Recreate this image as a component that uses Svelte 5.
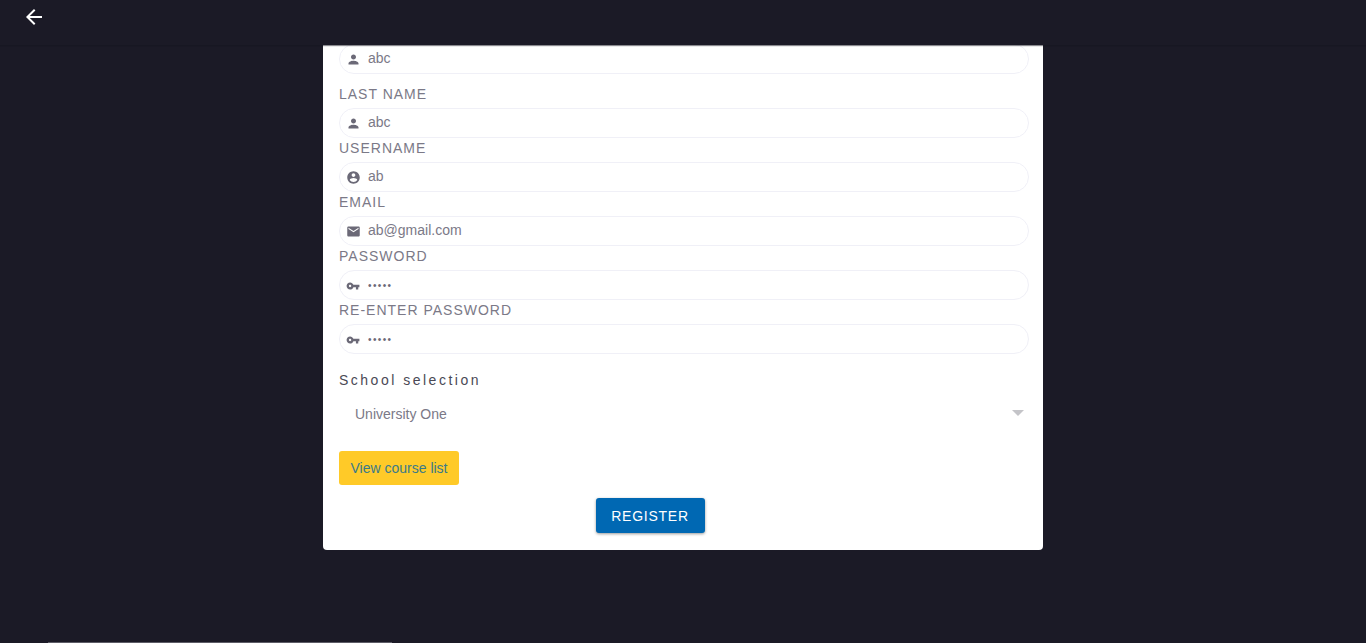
<script>
  const icons = {
    person: 'M12 12c2.21 0 4-1.79 4-4s-1.79-4-4-4-4 1.79-4 4 1.79 4 4 4zm0 2c-2.67 0-8 1.34-8 4v2h16v-2c0-2.66-5.33-4-8-4z',
    account: 'M12 2C6.48 2 2 6.48 2 12s4.48 10 10 10 10-4.48 10-10S17.52 2 12 2zm0 3c1.66 0 3 1.34 3 3s-1.34 3-3 3-3-1.34-3-3 1.34-3 3-3zm0 14.2c-2.5 0-4.71-1.28-6-3.22.03-1.99 4-3.08 6-3.08 1.99 0 5.97 1.09 6 3.08-1.29 1.94-3.5 3.22-6 3.22z',
    email: 'M20 4H4c-1.1 0-1.99.9-1.99 2L2 18c0 1.1.9 2 2 2h16c1.1 0 2-.9 2-2V6c0-1.1-.9-2-2-2zm0 4l-8 5-8-5V6l8 5 8-5v2z',
    key: 'M12.65 10C11.83 7.67 9.61 6 7 6c-3.31 0-6 2.69-6 6s2.69 6 6 6c2.61 0 4.83-1.67 5.65-4H17v4h4v-4h2v-4H12.65zM7 14c-1.1 0-2-.9-2-2s.9-2 2-2 2 .9 2 2-.9 2-2 2z'
  };
  const fields = [
    { label: '', icon: 'person', value: 'abc', type: 'text' },
    { label: 'LAST NAME', icon: 'person', value: 'abc', type: 'text' },
    { label: 'USERNAME', icon: 'account', value: 'ab', type: 'text' },
    { label: 'EMAIL', icon: 'email', value: 'ab@gmail.com', type: 'text' },
    { label: 'PASSWORD', icon: 'key', value: 'abcde', type: 'password' },
    { label: 'RE-ENTER PASSWORD', icon: 'key', value: 'abcde', type: 'password' }
  ];
</script>

<div class="page">
  <header class="bar">
    <button class="back" aria-label="Back">
      <svg viewBox="0 0 24 24" width="24" height="24"><path fill="#fff" d="M20 11H7.83l5.59-5.59L12 4l-8 8 8 8 1.41-1.41L7.83 13H20v-2z" /></svg>
    </button>
  </header>

  <main class="main">
    <form class="card">
      {#each fields as f, i}
        <div class="field" class:first={i === 0} class:second={i === 1}>
          {#if f.label}<label class="label" for={'f' + i}>{f.label}</label>{/if}
          <div class="input">
            <svg class="icon" class:key={f.icon === 'key'} viewBox="0 0 24 24"><path d={icons[f.icon]} /></svg>
            <input id={'f' + i} class:pw={f.type === 'password'} type={f.type} value={f.value} readonly />
          </div>
        </div>
      {/each}

      <div class="school">School selection</div>
      <div class="select">
        <span>University One</span>
        <svg class="caret" viewBox="0 0 12 6"><path d="M0 0h12L6 6z" /></svg>
      </div>

      <button type="button" class="courses">View course list</button>

      <div class="actions">
        <button type="button" class="register">REGISTER</button>
      </div>
    </form>
  </main>

  <div class="scroll"></div>
</div>

<style>
  :global(body) {
    margin: 0;
    background: #1b1a26;
  }
  .page {
    position: relative;
    height: 643px;
    overflow: hidden;
    background: #1b1a26;
    font-family: "Liberation Sans", Arial, sans-serif;
    display: flex;
    flex-direction: column;
  }
  .bar {
    position: relative;
    z-index: 2;
    height: 45px;
    flex: none;
    background: #1b1a26;
    box-shadow: 0 1px 1px rgba(20, 19, 30, 0.5);
    padding-left: 22px;
    box-sizing: border-box;
  }
  .back {
    display: block;
    width: 24px;
    height: 24px;
    margin-top: 5px;
    padding: 0;
    border: 0;
    background: none;
  }
  .main {
    flex: 1;
    padding-left: 323px;
  }
  .card {
    width: 720px;
    height: 505px;
    box-sizing: border-box;
    padding: 0 14px 0 16px;
    background: #fff;
    border-radius: 0 0 4px 4px;
    overflow: hidden;
  }
  .field.first {
    margin-top: -1px;
  }
  .field.second {
    margin-top: 12px;
  }
  .label {
    display: block;
    height: 16px;
    line-height: 16px;
    font-size: 14px;
    letter-spacing: 1px;
    color: #7b7987;
    margin-top: 2px;
    padding-bottom: 6px;
  }
  .input {
    display: flex;
    align-items: center;
    height: 30px;
    box-sizing: border-box;
    border: 1px solid #f0f0f7;
    border-radius: 15px;
    padding-left: 6px;
  }
  .icon {
    width: 15px;
    height: 15px;
    flex: none;
    fill: #6b6977;
    margin-top: 1px;
  }
  .icon.key {
    width: 14px;
    height: 14px;
    margin: 1px 1px 0 0;
  }
  input {
    flex: 1;
    min-width: 0;
    height: 100%;
    box-sizing: border-box;
    margin-left: 7px;
    padding: 0 0 2px;
    border: 0;
    outline: 0;
    background: none;
    font-family: inherit;
    font-size: 14px;
    color: #7b7987;
  }
  input.pw {
    font-size: 10px;
    letter-spacing: 1.4px;
    padding: 0;
    color: #6b6977;
  }
  .school {
    margin-top: 18px;
    height: 16px;
    line-height: 16px;
    font-size: 14px;
    letter-spacing: 2.5px;
    color: #4a4955;
  }
  .select {
    display: flex;
    align-items: center;
    justify-content: space-between;
    height: 36px;
    margin-top: 8px;
    padding-left: 16px;
    padding-right: 5px;
    font-size: 14px;
    color: #7b7987;
  }
  .caret {
    width: 12px;
    height: 6px;
    fill: #c4c4c8;
    margin-top: -3px;
  }
  .courses {
    display: block;
    width: 120px;
    height: 34px;
    margin-top: 19px;
    padding: 0;
    border: 0;
    border-radius: 3px;
    background: #ffca28;
    color: #3a7a8a;
    font-family: inherit;
    font-size: 14px;
  }
  .actions {
    display: flex;
    justify-content: center;
    margin-top: 13px;
    padding-right: 68px;
  }
  .register {
    width: 109px;
    height: 35px;
    padding: 0;
    border: 0;
    border-radius: 3px;
    background: #0068b3;
    color: #fff;
    font-family: inherit;
    font-size: 14px;
    font-weight: 500;
    letter-spacing: 0.75px;
    box-shadow: 0 1px 3px rgba(0, 0, 0, 0.4);
  }
  .scroll {
    position: absolute;
    left: 48px;
    bottom: 0;
    width: 344px;
    height: 1px;
    background: #5d5c66;
  }
</style>
